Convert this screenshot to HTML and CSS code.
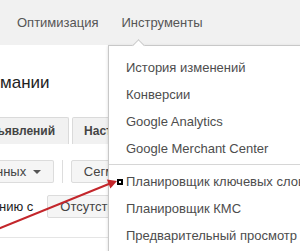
FILE: index.html
```html
<!DOCTYPE html>
<html lang="ru">
<head>
  <meta charset="UTF-8">
  <title>Инструменты</title>
  <link rel="stylesheet" href="styles.css">
</head>
<body>

  <!-- Top navigation -->
  <div class="topbar">
    <span class="nav-item">Оптимизация</span>
    <span class="nav-item">Инструменты</span>
  </div>

  <!-- Page content behind the menu -->
  <div class="content">
    <h1 class="page-title">мании</h1>

    <div class="tabs">
      <span class="tab tab-first">ъявлений</span>
      <span class="tab">Настройки</span>
    </div>

    <div class="toolbar">
      <span class="btn btn-first">нных <span class="caret"></span></span>
      <span class="divider"></span>
      <span class="btn">Сегмент</span>
    </div>

    <div class="compare-row">
      <span class="compare-label">нию с</span>
      <span class="btn">Отсутствует</span>
    </div>
  </div>

  <!-- Tools dropdown -->
  <div class="dropdown">
    <div class="menu-group">
      <div class="menu-item">История изменений</div>
      <div class="menu-item">Конверсии</div>
      <div class="menu-item">Google Analytics</div>
      <div class="menu-item">Google Merchant Center</div>
    </div>
    <div class="menu-sep"></div>
    <div class="menu-group">
      <div class="menu-item">Планировщик ключевых слов</div>
      <div class="menu-item">Планировщик КМС</div>
      <div class="menu-item">Предварительный просмотр и диагностика объявлений</div>
    </div>
  </div>

  <!-- Red annotation arrow -->
  <svg class="annotation" width="300" height="251" viewBox="0 0 300 251">
    <line x1="-2" y1="229" x2="110" y2="183.5" stroke="#c3262b" stroke-width="2"/>
    <polygon points="117,181 106.9,179.6 110.4,188.4" fill="#c3262b"/>
    <rect x="118" y="180" width="4" height="4" fill="#fff" stroke="#000" stroke-width="2"/>
  </svg>

</body>
</html>
```

FILE: styles.css
```css
body {
  font-family: "Liberation Sans", Arial, sans-serif;
  margin: 0;
  width: 300px;
  height: 251px;
  overflow: hidden;
  position: relative;
  background-color: #fff;
}
/* Top navigation */
.topbar {
  height: 45px;
  background-color: #f1f1f1;
  display: flex;
  align-items: center;
  padding-left: 17px;
  gap: 23px;
}
.nav-item {
  font-size: 13px;
  color: #555;
  padding-bottom: 1px;
}
/* Content */
.content {
  padding-top: 26px;
}
.page-title {
  margin: 0;
  font-size: 17px;
  font-weight: normal;
  color: #222;
  line-height: 24px;
}
.tabs {
  display: flex;
  gap: 3px;
  margin-top: 22px;
  margin-left: -4px;
}
.tab {
  height: 26px;
  line-height: 27px;
  padding: 0 11px;
  background-color: #f1f1f1;
  border: 1px solid #dadada;
  border-bottom: none;
  border-radius: 2px 2px 0 0;
  font-size: 12px;
  font-weight: bold;
  color: #444;
}
.tab-first {
  padding-left: 0;
  padding-right: 13px;
  border-left: none;
}
.toolbar {
  display: flex;
  align-items: center;
  margin-top: 16px;
  margin-left: -4px;
}
.btn {
  height: 21px;
  line-height: 21px;
  padding: 0 12px;
  background-color: #f5f5f5;
  border: 1px solid #dcdcdc;
  border-radius: 2px;
  font-size: 13px;
  color: #444;
  white-space: nowrap;
}
.btn-first {
  padding-left: 0;
  padding-right: 12px;
  border-left: none;
}
.caret {
  display: inline-block;
  width: 0;
  height: 0;
  margin-left: 3px;
  vertical-align: 2px;
  border-left: 4px solid transparent;
  border-right: 4px solid transparent;
  border-top: 4px solid #555;
}
.divider {
  width: 1px;
  height: 23px;
  background-color: #ddd;
  margin: 0 8px;
}
.compare-row {
  display: flex;
  align-items: center;
  gap: 14px;
  margin-top: 12px;
  margin-left: -1px;
  padding-bottom: 19px;
  border-bottom: 1px solid #e5e5e5;
}
.compare-label {
  font-size: 13px;
  color: #222;
}
/* Dropdown menu */
.dropdown {
  position: absolute;
  left: 108px;
  top: 45px;
  width: 260px;
  background-color: #fff;
  border: 1px solid #c8c8c8;
  box-shadow: 0 1px 3px rgba(0,0,0,0.15);
}
.dropdown:before {
  content: "";
  position: absolute;
  left: 25px;
  top: -5px;
  width: 8px;
  height: 8px;
  background-color: #fff;
  border-left: 1px solid #c8c8c8;
  border-top: 1px solid #c8c8c8;
  transform: rotate(45deg);
}
.menu-group {
  padding: 8px 0 2px;
}
.menu-group + .menu-sep + .menu-group {
  padding: 3px 0 6px;
}
.menu-item {
  height: 27px;
  line-height: 27px;
  padding-left: 17px;
  font-size: 13px;
  color: #4d4d4d;
  white-space: nowrap;
}
.menu-sep {
  height: 1px;
  background-color: #d6d6d6;
}
/* Annotation */
.annotation {
  position: absolute;
  left: 0;
  top: 0;
}
```
